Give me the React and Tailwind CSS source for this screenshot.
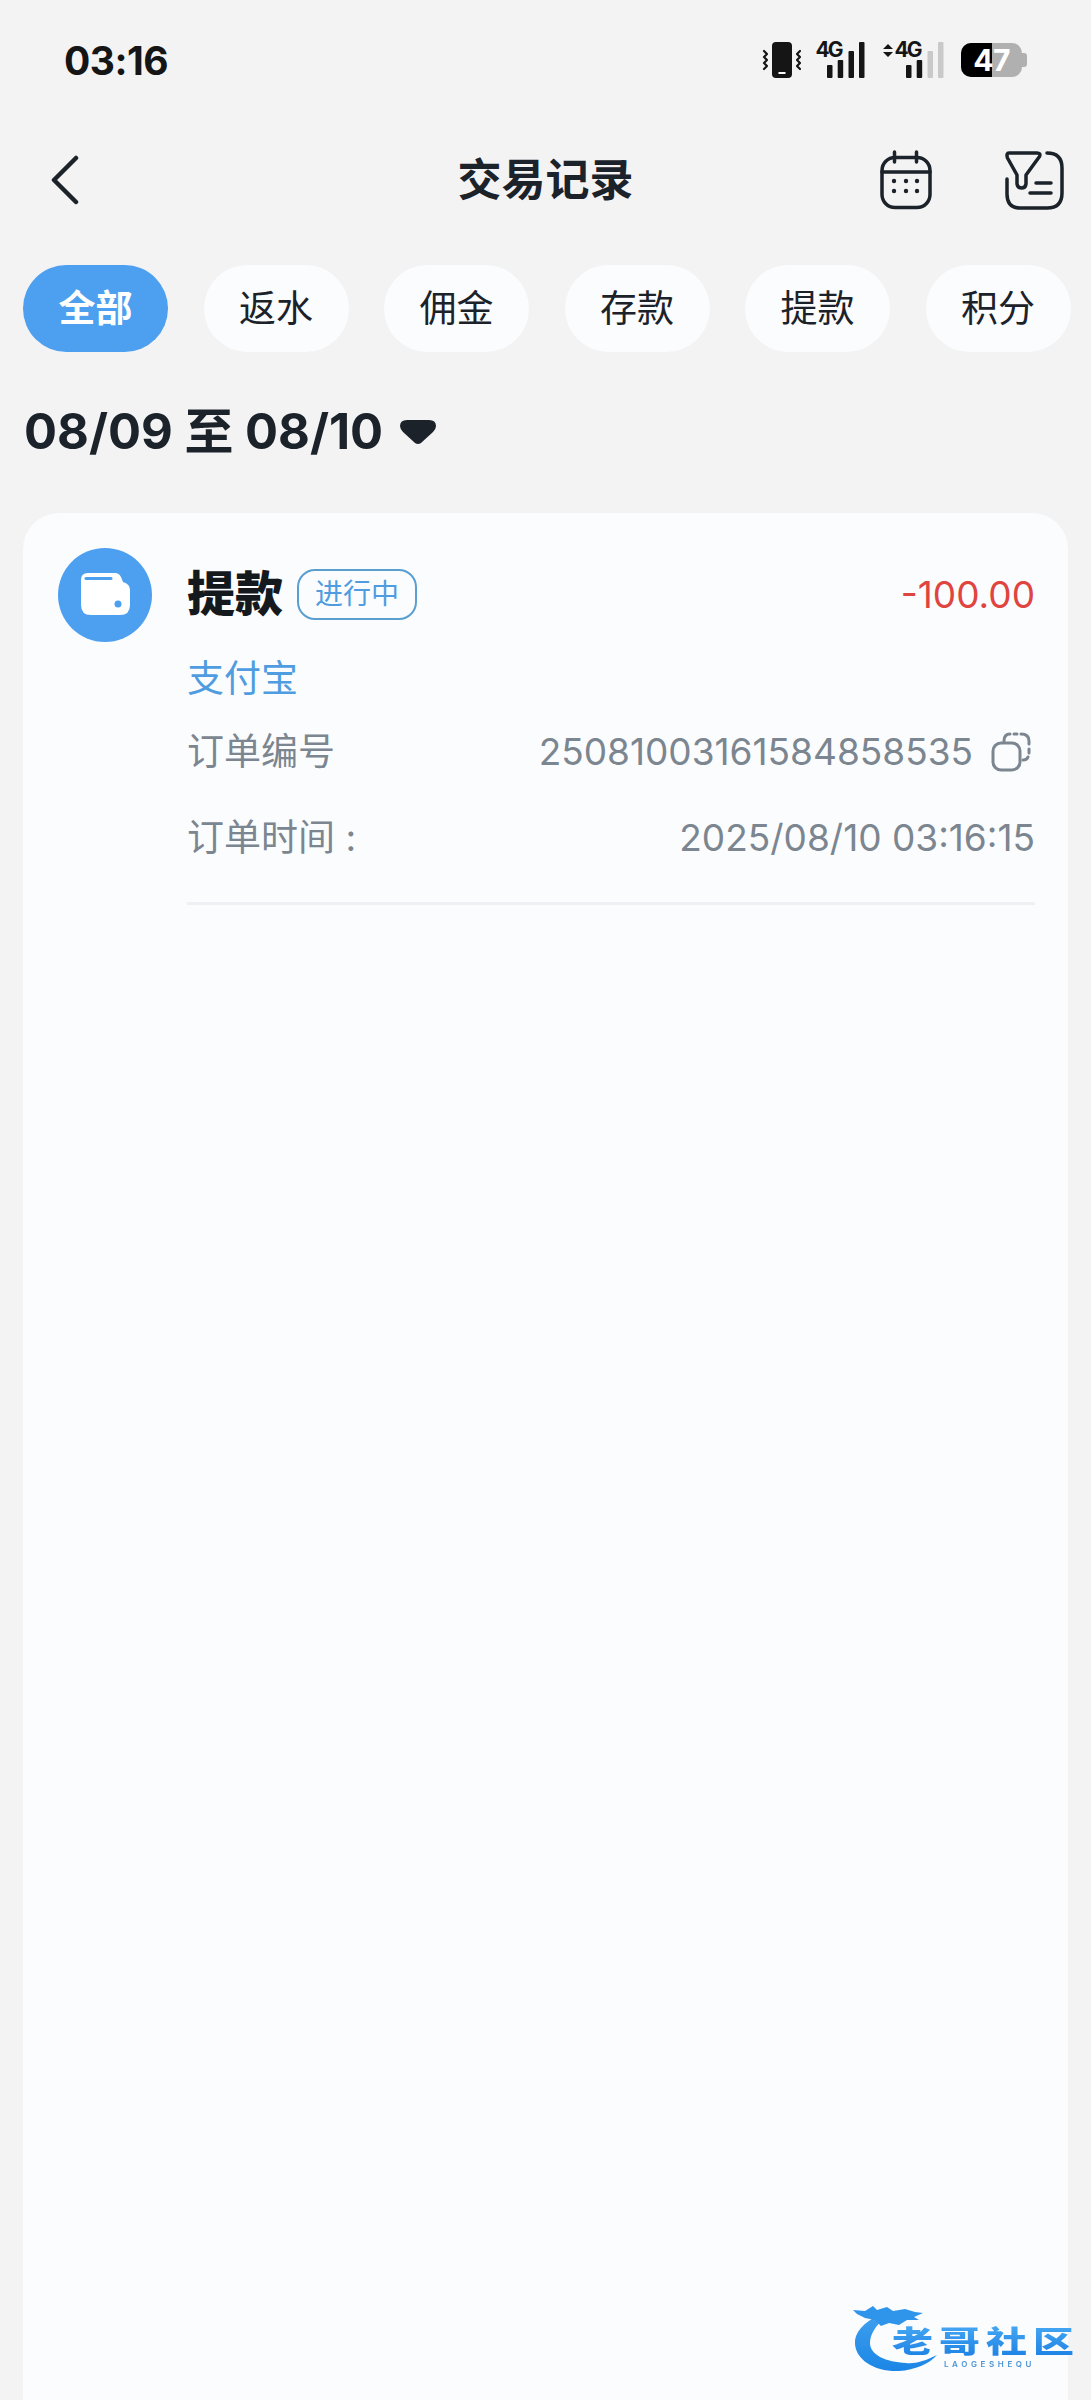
import React from 'react';

const tabs = ['全部', '返水', '佣金', '存款', '提款', '积分'];

const PhoneVibrate = () => (
  <svg width="44" height="36" viewBox="0 0 44 36" fill="none">
    <rect x="12" y="0" width="20" height="36" rx="4" fill="#151515" />
    <rect x="18.5" y="30" width="7" height="2" fill="#fff" />
    <path d="M4 9l3 3-3 3 3 3-3 3 3 3-3 3M40 9l-3 3 3 3-3 3 3 3-3 3 3 3" stroke="#151515" strokeWidth="2.2" strokeLinecap="round" strokeLinejoin="round" />
  </svg>
);

// signal bars with the 4G label, `on` = how many bars are lit
const Signal = ({ on, arrows }) => {
  const bars = [
    { x: 11, h: 13 },
    { x: 21.7, h: 18 },
    { x: 32.5, h: 27 },
    { x: 43, h: 36 },
  ];
  return (
    <svg width={arrows ? 62 : 49} height="52" viewBox={arrows ? '-13 -8 62 52' : '0 -8 49 52'}>
      {arrows && <path d="M-12 7l5-5 5 5zM-12 10l5 5 5-5z" fill="#151515" />}
      <text x="-0.5" y="15" fontSize="21" fontWeight="700" letterSpacing="-2" fill="#151515" fontFamily="Inter, sans-serif">4G</text>
      {bars.map((b, i) => (
        <rect key={b.x} x={b.x} y={36 - b.h} width="5.5" height={b.h} rx="1" fill={i < on ? '#151515' : '#c9c9c9'} />
      ))}
    </svg>
  );
};

const Battery = () => (
  <div className="flex items-center">
    <div className="relative flex h-[34px] w-[61px] items-center justify-center overflow-hidden rounded-[10px] bg-[#b0b0b0]">
      <div className="absolute inset-y-0 left-0 w-[31px] bg-black" />
      <span className="relative text-[30px] leading-none font-bold tracking-[-0.5px] text-white">47</span>
    </div>
    <div className="h-[14px] w-[5px] rounded-r-[3px] bg-[#b0b0b0]" />
  </div>
);

const CalendarIcon = () => (
  <svg width="52" height="60" viewBox="0 0 52 60" fill="none" stroke="#1b2229" strokeWidth="3.5" strokeLinecap="round">
    <rect x="2" y="7.5" width="48" height="50" rx="13" />
    <path d="M2 22h48M14.5 2v10M36.5 2v10" />
    <g fill="#1b2229" stroke="none">
      <circle cx="14" cy="31" r="2.2" />
      <circle cx="26" cy="31" r="2.2" />
      <circle cx="37" cy="31" r="2.2" />
      <circle cx="14" cy="41" r="2.2" />
      <circle cx="26" cy="41" r="2.2" />
      <circle cx="37" cy="41" r="2.2" />
    </g>
  </svg>
);

const FilterIcon = () => (
  <svg width="59" height="59" viewBox="0 0 59 59" fill="none" stroke="#1b2229" strokeWidth="3.5" strokeLinecap="round" strokeLinejoin="round">
    <path d="M4 2h28q4 0 2.5 3.5L21 24v9q-.5 4-4.5 4T12 33v-9L2.5 7Q1 2 4 2z" />
    <path d="M42 2q15 0 15 15v25q0 15-15 15H15Q2 57 2 43V28" />
    <path d="M31 32h15M25 42h21" />
  </svg>
);

const WalletBadge = () => (
  <svg width="94" height="94" viewBox="0 0 94 94" className="shrink-0">
    <circle cx="47" cy="47" r="47" fill="#4d9fef" />
    <path d="M30 25h27q4 0 6 4l2 5q7 2 7 8v15q0 10-10 10H33q-10 0-10-10V32q0-7 7-7z" fill="#fff" />
    <path d="M28 30.5h25" stroke="#4d9fef" strokeWidth="3" strokeLinecap="round" />
    <circle cx="60" cy="56" r="3.5" fill="#4d9fef" />
  </svg>
);

const CopyIcon = () => (
  <svg width="40" height="40" viewBox="0 0 40 40" fill="none" stroke="#7b8690" strokeWidth="3" strokeLinecap="round" className="mr-[4px] shrink-0">
    <rect x="2" y="11" width="27" height="27" rx="8" />
    <path d="M13 9q0-7 6-7M23 2h3M30 2q8 0 8 7v3M38 17v4M37 25q-1 3-5 3" />
  </svg>
);

const Watermark = () => (
  <div className="absolute top-[2305px] left-[853px] h-[67px] w-[220px] blur-[0.6px]">
    <svg width="90" height="67" viewBox="0 0 90 67" className="absolute top-0 left-0">
      <defs>
        <linearGradient id="drg" x1="0" y1="0" x2="0" y2="1">
          <stop offset="0" stopColor="#3fa0ee" />
          <stop offset="1" stopColor="#1b86e6" />
        </linearGradient>
      </defs>
      <path d="M27 9C10 18 1 28 2 39c1 16 20 28 44 27 16-1 30-7 38-16-12 6-22 9-31 8-20-1-36-8-36-20 0-9 6-18 16-26z" fill="url(#drg)" />
      <path d="M0 5l12 1 8-5 4 4 10-3 6 4 12-2 10 3 8 1-9 4 5 3-12 0-8 5-10-2-8 3-6-6-10-2-8-4z" fill="#2f95ea" />
    </svg>
    <span className="absolute top-[19px] left-[39px] origin-top scale-y-[0.72] bg-gradient-to-b from-[#46a8f2] to-[#1a80e4] bg-clip-text text-[41px] leading-[48px] font-black tracking-[6px] whitespace-nowrap text-transparent">老哥社区</span>
    <span className="absolute top-[54px] left-[91px] text-[8px] leading-[10px] font-semibold tracking-[3.6px] whitespace-nowrap text-[#4b93d6]">LAOGESHEQU</span>
  </div>
);

const InfoRow = ({ label, children }) => (
  <div className="flex items-center justify-between text-[#7b8690]">
    <span className="text-[37px] leading-[44px]">{label}</span>
    {children}
  </div>
);

export default function App() {
  return (
    <div className="relative flex h-[2400px] w-[1091px] flex-col overflow-hidden bg-[#f3f3f4] font-['Inter','Noto_Sans_CJK_SC',sans-serif] text-[#1b2229]">
      {/* status bar */}
      <div className="flex h-[118px] shrink-0 items-center justify-between pt-[2px] pr-[64px] pl-[64px]">
        <span className="text-[39px] leading-none font-bold tracking-[-0.5px] text-[#151515]">03:16</span>
        <div className="flex items-center">
          <PhoneVibrate />
          <div className="ml-[12px]"><Signal on={4} /></div>
          <div className="ml-[17px]"><Signal on={2} arrows /></div>
          <div className="ml-[17px]"><Battery /></div>
        </div>
      </div>

      {/* nav */}
      <div className="grid h-[124px] shrink-0 grid-cols-[1fr_auto_1fr] items-center">
        <div className="pl-[50px]">
          <svg width="30" height="50" viewBox="0 0 30 50" fill="none" stroke="#1b2229" strokeWidth="4.5" strokeLinecap="round" strokeLinejoin="round">
            <path d="M26 3L4 25l22 22" />
          </svg>
        </div>
        <h1 className="text-[44px] leading-none font-bold">交易记录</h1>
        <div className="flex items-center justify-end gap-[73px] pr-[27px]">
          <CalendarIcon />
          <FilterIcon />
        </div>
      </div>

      {/* tabs */}
      <div className="mt-[23px] flex shrink-0 gap-[35.5px] pl-[23px]">
        {tabs.map((t, i) => (
          <div
            key={t}
            className={`flex h-[87px] w-[145px] shrink-0 items-center justify-center rounded-full text-[37px] ${i === 0 ? 'bg-[#4d9fef] font-semibold text-white' : 'bg-[#fbfcfe] text-[#1b2229]'}`}
          >
            {t}
          </div>
        ))}
      </div>

      {/* date range */}
      <div className="mt-[49px] flex h-[60px] shrink-0 items-center gap-[17px] pl-[24px]">
        <span className="text-[49px] leading-none font-bold">08/09 至 08/10</span>
        <svg width="36" height="24" viewBox="0 0 36 24" className="mt-[2px]">
          <path d="M7 0h22q7 0 7 6 0 3-3 6L21 23q-3 2-6 0L3 12Q0 9 0 6q0-6 7-6z" fill="#1b2229" />
        </svg>
      </div>

      {/* record card */}
      <div className="mt-[52px] mr-[23px] ml-[23px] flex flex-1 gap-[35px] rounded-t-[36px] bg-[#fbfcfe] pt-[35px] pr-[33px] pl-[35px]">
        <WalletBadge />
        <div className="flex-1 pt-[15px]">
          <div className="flex h-[62px] items-center justify-between">
            <div className="flex items-center gap-[14px]">
              <span className="text-[48px] leading-none font-black text-[#14191e]">提款</span>
              <span className="flex h-[51px] w-[120px] items-center justify-center rounded-[18px] border-2 border-[#5a9fd0] text-[28px] leading-none text-[#4f9de0]">进行中</span>
            </div>
            <span className="text-[37px] leading-none text-[#e0443e]">-100.00</span>
          </div>
          <div className="mt-[32px] text-[37px] leading-[44px] text-[#4f9de0]">支付宝</div>
          <div className="mt-[29px]">
            <InfoRow label="订单编号">
              <div className="flex items-center gap-[18px]">
                <span className="text-[37px] leading-[44px]">25081003161584858535</span>
                <CopyIcon />
              </div>
            </InfoRow>
          </div>
          <div className="mt-[42px]">
            <InfoRow label="订单时间 :">
              <span className="text-[37px] leading-[44px]">2025/08/10 03:16:15</span>
            </InfoRow>
          </div>
          <div className="mt-[42px] h-[3px] bg-[#eef0f3]" />
        </div>
      </div>

      <Watermark />
    </div>
  );
}
